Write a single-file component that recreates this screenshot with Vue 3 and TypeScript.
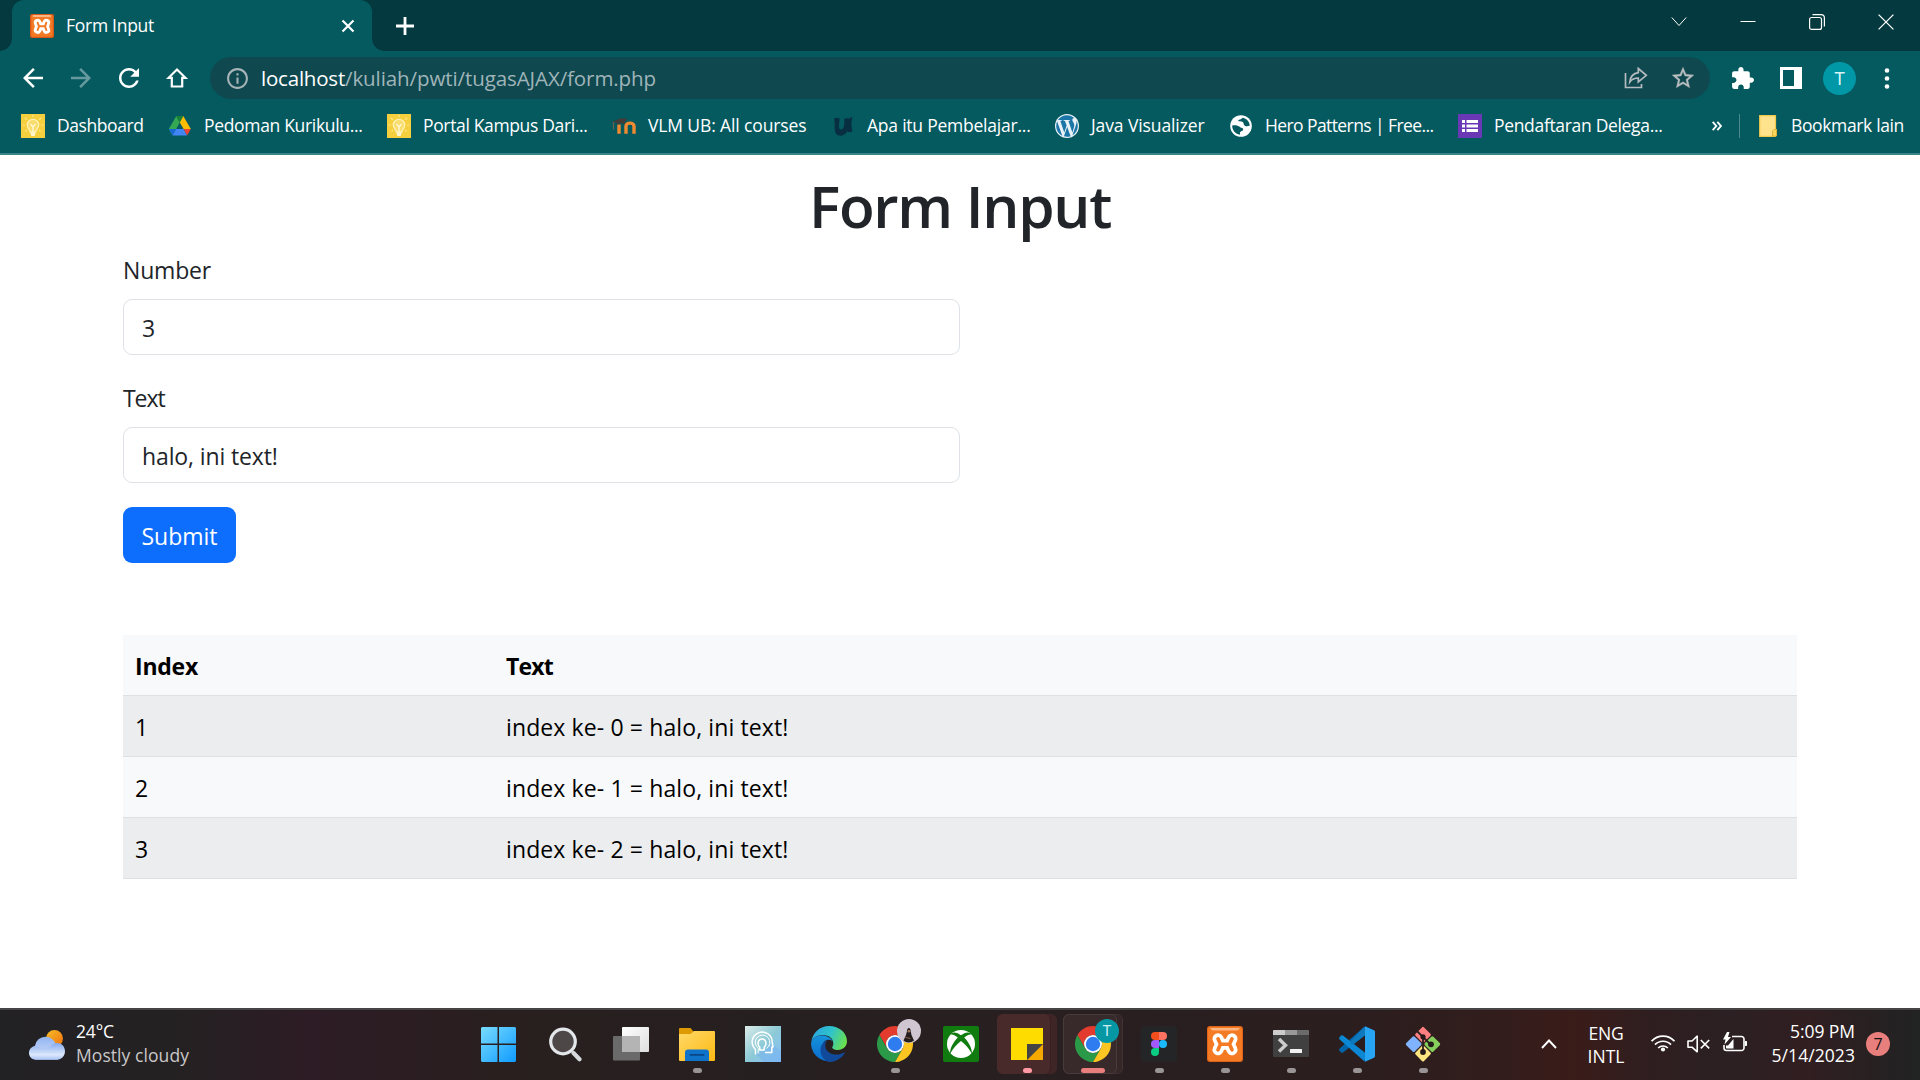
<script setup lang="ts">
import type { Directive } from 'vue'

interface Bookmark {
  icon: 'bulb' | 'drive' | 'moodle' | 'unesa' | 'wordpress' | 'globe' | 'forms'
  label: string
  width: number
}

const bookmarks: Bookmark[] = [
  { icon: 'bulb', label: 'Dashboard', width: 87 },
  { icon: 'drive', label: 'Pedoman Kurikulu...', width: 159 },
  { icon: 'bulb', label: 'Portal Kampus Dari...', width: 165 },
  { icon: 'moodle', label: 'VLM UB: All courses', width: 159 },
  { icon: 'unesa', label: 'Apa itu Pembelajar...', width: 164 },
  { icon: 'wordpress', label: 'Java Visualizer', width: 114 },
  { icon: 'globe', label: 'Hero Patterns | Free...', width: 169 },
  { icon: 'forms', label: 'Pendaftaran Delega...', width: 169 },
]

const rows = [0, 1, 2].map((i) => ({ index: i + 1, text: `index ke- ${i} = halo, ini text!` }))

// Spreads the letters of an element so that its text takes the given width.
const vFit: Directive<HTMLElement, number> = {
  mounted(el, { value }) {
    const range = document.createRange()
    range.selectNodeContents(el)
    const natural = range.getBoundingClientRect().width
    const count = (el.textContent ?? '').trim().length
    el.style.letterSpacing = `${(value - natural) / count}px`
  },
}
</script>

<template>
  <div class="screen">
    <header class="browser">
      <div class="tabstrip">
        <div class="tab">
          <svg class="favicon" viewBox="0 0 36 36">
            <rect width="36" height="36" rx="3" fill="#d95a18" />
            <rect x="2" y="2" width="32" height="32" rx="2" fill="#f37a25" />
            <rect x="4" y="1.5" width="28" height="3" rx="1.5" fill="#fbb684" />
            <g fill="none" stroke-linecap="round" stroke-linejoin="round">
              <path d="M11.5 13l2 5.500-2 5.500M13.500 18.500h9M24.500 13l-2 5.500 2 5.500" stroke="#fff" stroke-width="11.500" />
              <path d="M11.500 13l2 5.500-2 5.500M13.500 18.500h9M24.500 13l-2 5.500 2 5.500" stroke="#f37a25" stroke-width="3" />
            </g>
          </svg>
          <span v-fit="88" class="tab-title">Form Input</span>
          <svg class="tab-close" viewBox="0 0 14 14"><path d="M1.500 1.500l11 11M12.500 1.500l-11 11" stroke="#fff" stroke-width="2.200" /></svg>
        </div>
        <svg class="new-tab" viewBox="0 0 18 18"><path d="M9 0v18M0 9h18" stroke="#fff" stroke-width="2.800" /></svg>
        <div class="window-buttons">
          <svg viewBox="0 0 16 16"><path d="M.8 3.500L8 11.500l7.200-8" stroke-width="1" /></svg>
          <svg viewBox="0 0 16 16"><path d="M.5 7.500h15" stroke-width="1" /></svg>
          <svg viewBox="0 0 16 16"><rect x=".6" y="3.500" width="11.900" height="11.900" rx="2" /><path d="M3.500.600H12a3.400 3.400 0 0 1 3.400 3.400v8.500" /></svg>
          <svg viewBox="0 0 16 16"><path d="M.6.600l14.800 14.800M15.400.600L.6 15.400" stroke-width="1.300" /></svg>
        </div>
      </div>

      <div class="toolbar">
        <svg class="nav" viewBox="0 0 24 24"><path d="M20 11H7.830l5.590-5.590L12 4l-8 8 8 8 1.410-1.410L7.830 13H20v-2z" fill="#fff" /></svg>
        <svg class="nav" viewBox="0 0 24 24"><path d="M4 11h12.170l-5.590-5.590L12 4l8 8-8 8-1.410-1.410L16.170 13H4v-2z" fill="#679a9e" /></svg>
        <svg class="nav" viewBox="0 0 24 24"><path d="M17.650 6.350C16.200 4.900 14.210 4 12 4c-4.420 0-7.990 3.580-7.990 8s3.570 8 7.990 8c3.730 0 6.840-2.550 7.730-6h-2.080c-.82 2.330-3.040 4-5.650 4-3.310 0-6-2.690-6-6s2.690-6 6-6c1.660 0 3.140.690 4.220 1.780L13 11h7V4l-2.350 2.350z" fill="#fff" /></svg>
        <svg class="nav" viewBox="0 0 30 30"><path d="M15 6.500L6.600 14.800h3.200v8.700h10.400v-8.700h3.200z" fill="none" stroke="#fff" stroke-width="2.200" /></svg>
        <div class="omnibox">
          <svg class="info" viewBox="0 0 24 24"><path d="M11 7h2v2h-2zm0 4h2v6h-2zm1-9C6.480 2 2 6.480 2 12s4.480 10 10 10 10-4.480 10-10S17.520 2 12 2zm0 18c-4.410 0-8-3.590-8-8s3.590-8 8-8 8 3.590 8 8-3.590 8-8 8z" fill="#a6b4b8" /></svg>
          <span class="url"><b v-fit="84">localhost</b><span v-fit="311">/kuliah/pwti/tugasAJAX/form.php</span></span>
          <svg class="share" viewBox="0 0 24 24"><g fill="none" stroke="#b3bbbe" stroke-width="1.700"><path d="M1.500 7v14.500H17.500V18" /><path d="M14.300 2.500L22.300 9.300l-8 6.700v-4c-4 0-6.500 1.200-8.500 4 .5-5 3.500-8.700 8.500-9.400z" /></g></svg>
          <svg class="star" viewBox="0 0 24 24"><path d="M22 9.240l-7.190-.62L12 2 9.190 8.630 2 9.240l5.460 4.730L5.820 21 12 17.270 18.180 21l-1.630-7.030L22 9.240zM12 15.400l-3.760 2.270 1-4.280-3.320-2.880 4.380-.38L12 6.100l1.710 4.040 4.380.380-3.320 2.880 1 4.280L12 15.400z" fill="#b9bdbf" stroke="#b9bdbf" stroke-width=".3" /></svg>
        </div>
        <svg class="ext" viewBox="0 0 24 24"><path d="M20.500 11H19V7c0-1.100-.9-2-2-2h-4V3.500C13 2.120 11.880 1 10.500 1S8 2.120 8 3.500V5H4c-1.100 0-1.990.900-1.990 2v3.800H3.500c1.490 0 2.700 1.210 2.700 2.700s-1.210 2.700-2.700 2.700H2V20c0 1.100.900 2 2 2h3.800v-1.500c0-1.490 1.210-2.700 2.700-2.700 1.490 0 2.700 1.210 2.700 2.700V22H17c1.100 0 2-.9 2-2v-4h1.500c1.380 0 2.500-1.120 2.500-2.500S21.880 11 20.500 11z" fill="#fff" /></svg>
        <svg class="panel" viewBox="0 0 22 22"><path d="M0 0h22v22H0zM3 3v16h11V3z" fill="#fff" fill-rule="evenodd" /></svg>
        <span class="avatar">T</span>
        <svg class="kebab" viewBox="0 0 6 21"><circle cx="3" cy="2.500" r="2.300" fill="#fff" /><circle cx="3" cy="10.500" r="2.300" fill="#fff" /><circle cx="3" cy="18.500" r="2.300" fill="#fff" /></svg>
      </div>

      <div class="bookmarks">
        <div v-for="(b, i) in bookmarks" :key="i" class="bookmark">
          <svg viewBox="0 0 24 24">
            <g v-if="b.icon === 'bulb'">
              <rect width="24" height="24" fill="#f5cf3d" />
              <path d="M9.300 18c0-2.500-3-3.500-3-7a5.700 5.700 0 0 1 11.400 0c0 3.500-3 4.500-3 7z" fill="#f8dc6c" stroke="#fff2b8" stroke-width="1.300" />
              <path d="M9.500 10l2.500 3 2.500-3M12 13v5" fill="none" stroke="#fff8dc" stroke-width="1.300" />
              <path d="M9.300 18.500h5.400l-1 3.500h-3.400z" fill="#fff5cf" />
              <path d="M12 1v2M4 4l1.800 1.800M20 4l-1.800 1.800M1.500 11h2.200M20.300 11h2.200M4.500 17.500L6 16M19.500 17.500L18 16" stroke="#fbe78f" stroke-width="1.200" />
            </g>
            <g v-else-if="b.icon === 'drive'" transform="translate(.8 2)">
              <path d="M7.500 0L0 13l3.700 6.500L11 6.500z" fill="#34a853" />
              <path d="M7.500 0h7L11 6.500z" fill="#188038" />
              <path d="M14.500 0L22 13h-7.200L11 6.500z" fill="#fbbc04" />
              <path d="M3.700 19.500L7.300 13h7.500l3.600 6.500z" fill="#4285f4" />
              <path d="M0 13h7.300l-3.600 6.500z" fill="#1967d2" />
              <path d="M14.800 13H22l-3.600 6.500z" fill="#ea4335" />
            </g>
            <g v-else-if="b.icon === 'moodle'">
              <path d="M7 19.700V10.500M14 19.700V12c0-3.800 8-3.800 8 0v7.700" fill="none" stroke="#ef8a30" stroke-width="3.400" />
              <path d="M0 8L8.500 4.200l6.800.3-2.300 3.300v2.400c-2.500-1.300-5.500-.9-7.800.6L4.500 8.500z" fill="#433d3a" />
              <path d="M1.500 8v7.500" stroke="#6b6252" stroke-width="1.200" />
            </g>
            <path v-else-if="b.icon === 'unesa'" d="M3 4.500c2-1 4.200-.9 5.800.3-.6 4-1.400 8.400-.3 10 1 1.300 2.700 1 3.700-.6 1.100-2 1.300-5.700 1-9.200 1.500-.8 3.200-.9 4.500-.3l3.800-2-.8 3.200c-.4 3.500-.5 7.500.8 11-1.600 1.600-3.700 1.800-5.200.6-2.600 4.500-8.300 5.600-11.200 2.200C2.700 16.500 4.500 9.500 3 4.500z" fill="#082e42" />
            <g v-else-if="b.icon === 'wordpress'">
              <circle cx="12" cy="12" r="12" fill="#e8f1f5" />
              <path fill="#1b75a7" d="M21.469 6.825c.84 1.537 1.318 3.300 1.318 5.175 0 3.979-2.156 7.456-5.363 9.325l3.295-9.527c.615-1.540.820-2.771.820-3.864 0-.405-.026-.780-.070-1.110m-7.981.105c.647-.030 1.232-.105 1.232-.105.582-.075.514-.930-.067-.899 0 0-1.755.135-2.880.135-1.064 0-2.850-.150-2.850-.150-.585-.030-.661.855-.075.885 0 0 .540.061 1.125.090l1.680 4.605-2.370 7.080L5.354 6.900c.649-.030 1.234-.100 1.234-.100.585-.075.516-.930-.065-.896 0 0-1.746.138-2.874.138-.200 0-.438-.008-.690-.015C4.911 3.150 8.235 1.215 12 1.215c2.809 0 5.365 1.072 7.286 2.833-.046-.003-.091-.009-.141-.009-1.060 0-1.812.923-1.812 1.914 0 .890.513 1.643 1.060 2.531.411.720.890 1.643.890 2.977 0 .915-.354 1.994-.821 3.479l-1.075 3.585-3.900-11.610.001.014zM12 22.784c-1.059 0-2.081-.153-3.048-.437l3.237-9.406 3.315 9.087c.024.053.050.101.078.149-1.120.393-2.325.609-3.582.609M1.211 12c0-1.564.336-3.050.935-4.390L7.290 21.709C3.694 19.960 1.212 16.271 1.211 12" />
            </g>
            <g v-else-if="b.icon === 'globe'">
              <circle cx="12" cy="12" r="10.800" fill="#fff" />
              <path d="M13.500 3.800c3.800.6 6.800 3.600 7.300 7.600-1.500 1-4.300 1.200-5.500-.2-1-1.300-.3-2.700-2-3.400-1.500-.5-3.500.2-4-1-.3-1.300 3.500-1.200 4.200-3z" fill="#055a60" />
              <path d="M3.200 11.500c2.700-.6 5.800-.2 7.500 1.300 1.200 1.300 3.400.8 3.500 2.700 0 1.800-2.700 1.500-3.200 3-.2.700.2 1.400 0 2.200-4.500-.5-8-4.500-7.800-9.200z" fill="#055a60" />
            </g>
            <g v-else>
              <rect width="24" height="24" fill="#6a37b5" />
              <path d="M4 6h3v3H4zM8.500 6H20v3H8.500zM4 10.500h3v3H4zM8.500 10.500H20v3H8.500zM4 15h3v3H4zM8.500 15H20v3H8.500z" fill="#fff" />
            </g>
          </svg>
          <span v-fit="b.width - 0.5" class="bookmark-label" :style="{ width: b.width + 'px' }">{{ b.label }}</span>
        </div>
        <svg class="more" viewBox="0 0 10 10"><path d="M.7.800L4.300 5 .7 9.200M5.300.800L8.900 5 5.300 9.200" fill="none" stroke="#fff" stroke-width="1.900" /></svg>
        <span class="divider"></span>
        <svg class="folder" viewBox="0 0 18 22"><path d="M.7.700h15.800v13.800h.9v5.800l-1 1H.7z" fill="#ffe38c" stroke="#f2c94c" stroke-width="1.200" /><path d="M13.500 21v-5l1.500-1.500h2.500V20l-1 1.300z" fill="#fbd65c" stroke="#dba92d" stroke-width=".8" /></svg>
        <span v-fit="113" class="bookmark-label">Bookmark lain</span>
      </div>
    </header>

    <main class="page">
      <h1><span v-fit="302">Form Input</span></h1>
      <form class="form" @submit.prevent>
        <label for="number"><span v-fit="88">Number</span></label>
        <input id="number" type="text" value="3" />
        <label for="text"><span v-fit="41.5">Text</span></label>
        <input id="text" type="text" value="halo, ini text!" />
        <button type="submit"><span v-fit="76">Submit</span></button>
      </form>
      <table>
        <thead>
          <tr>
            <th class="index"><span v-fit="63">Index</span></th>
            <th><span v-fit="47">Text</span></th>
          </tr>
        </thead>
        <tbody>
          <tr v-for="row in rows" :key="row.index">
            <td>{{ row.index }}</td>
            <td><span v-fit="282.5">{{ row.text }}</span></td>
          </tr>
        </tbody>
      </table>
    </main>

    <footer class="taskbar">
      <div class="weather">
        <svg viewBox="0 0 36 30">
          <defs>
            <linearGradient id="sun" x1="0" y1="0" x2="1" y2="1"><stop offset="0" stop-color="#f6bd2a" /><stop offset="1" stop-color="#f0700c" /></linearGradient>
            <linearGradient id="cloudBack" x1="0" y1="0" x2="0" y2="1"><stop offset="0" stop-color="#92b4f2" /><stop offset="1" stop-color="#d3e1fa" /></linearGradient>
            <linearGradient id="cloudFront" x1="0" y1="0" x2="0" y2="1"><stop offset="0" stop-color="#84a9ee" /><stop offset=".7" stop-color="#dce8fb" /><stop offset="1" stop-color="#a8c4f6" /></linearGradient>
          </defs>
          <circle cx="25.500" cy="8.500" r="8.500" fill="url(#sun)" />
          <path d="M7 29.500a7 7 0 0 1-1-13.800A10.700 10.700 0 0 1 27 15l2 14.500z" fill="url(#cloudBack)" />
          <path d="M7 29.700c-3.500 0-7-2.500-7-6.700s3-6.500 6.500-6.500c3 0 5 1 6.500 2.500L21 17c1.500-2.500 4-4 7-4 4.500 0 8 3.500 8 8.200s-3.500 8.500-8 8.500z" fill="url(#cloudFront)" />
        </svg>
        <div class="weather-text">
          <span v-fit="38">24°C</span>
          <span v-fit="113" class="muted">Mostly cloudy</span>
        </div>
      </div>

      <nav class="apps">
        <div class="app">
          <svg viewBox="0 0 36 36">
            <defs><linearGradient id="win" x1="0" y1="0" x2="1" y2="1"><stop offset="0" stop-color="#79dcff" /><stop offset="1" stop-color="#0f9bff" /></linearGradient></defs>
            <path d="M1 1h15.500v16.500H0V2zM18 1h16l1 1v15.500H18zM0 19h16.500v17H1l-1-1zM18 19h17v16l-1 1H18z" fill="url(#win)" />
          </svg>
        </div>
        <div class="app">
          <svg viewBox="0 0 36 36"><path d="M26.500 27l6 6.300" stroke="#d7dadd" stroke-width="4.200" stroke-linecap="round" /><circle cx="16" cy="15.500" r="12.300" fill="#4d4748" stroke="#e4e7ea" stroke-width="3.200" /></svg>
        </div>
        <div class="app">
          <svg viewBox="0 0 36 36">
            <defs><linearGradient id="view" x1="0" y1="0" x2="1" y2="1"><stop offset="0" stop-color="#fff" /><stop offset="1" stop-color="#dedede" /></linearGradient></defs>
            <rect x="9" y="1" width="27" height="25" rx="1" fill="url(#view)" /><rect y="10" width="27" height="24.500" rx="1" fill="#6a6a6a" /><path d="M9 10h18v16H9z" fill="#b4b4b4" />
          </svg>
        </div>
        <div class="app">
          <svg viewBox="0 0 36 36">
            <defs><linearGradient id="dir" x1="0" y1="0" x2="1" y2="1"><stop offset="0" stop-color="#ffd968" /><stop offset="1" stop-color="#fdb913" /></linearGradient></defs>
            <path d="M0 3a1 1 0 0 1 1-1h10.500l3 3.500V9H0z" fill="#dd9a05" /><path d="M0 8h11.500L15 5h20a1 1 0 0 1 1 1v28a1 1 0 0 1-1 1H1a1 1 0 0 1-1-1z" fill="url(#dir)" /><path d="M6 35v-8.500a3 3 0 0 1 3-3h18a3 3 0 0 1 3 3V35z" fill="#0f74c9" /><rect x="10.500" y="28" width="15" height="1.800" rx=".8" fill="#0a4688" />
          </svg>
          <i class="dot"></i>
        </div>
        <div class="app">
          <svg viewBox="0 0 36 36">
            <defs><linearGradient id="tips" x1="0" y1="0" x2="1" y2="1"><stop offset="0" stop-color="#dcece8" /><stop offset=".5" stop-color="#8dcad6" /><stop offset="1" stop-color="#84bdfb" /></linearGradient></defs>
            <rect width="36" height="36" fill="url(#tips)" /><path d="M11 28l8 8h17V25l-8-6z" fill="#76b1ee" opacity=".5" />
            <g fill="none" stroke="#fff" stroke-width="1.500" stroke-linejoin="round"><path d="M10.500 28.500v-5a10 10 0 1 1 16.700-7.500l.8 5h-1.200v5.500H20" /><path d="M14.800 24v-2.800c-3.200-3.200-1.600-8.200 2.200-8.200s5.400 5 2.200 8.200V24z" /></g>
            <path d="M13.200 27.500v-5.300a7.300 7.300 0 1 1 8.300.3" fill="none" stroke="#fff" stroke-width="1" />
          </svg>
        </div>
        <div class="app">
          <svg viewBox="0 0 36 36">
            <defs>
              <linearGradient id="edgeTop" x1="0" y1=".3" x2="1" y2=".6"><stop offset="0" stop-color="#2aa4de" /><stop offset=".5" stop-color="#2fc3cc" /><stop offset="1" stop-color="#6be04b" /></linearGradient>
              <linearGradient id="edgeLow" x1="0" y1="0" x2="0" y2="1"><stop offset="0" stop-color="#1692dc" /><stop offset="1" stop-color="#0a6ccc" /></linearGradient>
            </defs>
            <path d="M.3 16C1.500 6.500 9 0 18 0c10.500 0 18 7 18 15.300 0 5-4 8.700-9 8.700-4 0-6.200-1.500-5.700-3 .8-1.300 1-2.200 1-3.500 0-5-4.500-8.500-10-8.500C6 9 1.500 12 .3 16z" fill="url(#edgeTop)" />
            <path d="M.3 16C1.500 12 6 9.500 11 9.500c5.500 0 9 2.500 10.500 5.500-4-3-10-1-10 5.500 0 7.500 7.500 14 14.500 13A18 18 0 0 1 0 18z" fill="url(#edgeLow)" />
            <path d="M16.500 14.500c-2.500 2-3 5.500-1.500 8.500 2 4 7 6 12 5.500 2.500-.3 4.500-1.200 6-2 .8-.3 1 .3.500 1-3.500 5.500-9.500 8.500-15.500 8.500-5.500-2-8.500-7-8.500-12 0-5 3-8.500 7-9.500z" fill="#114a9a" />
          </svg>
        </div>
        <div class="app">
          <svg viewBox="0 0 48 48"><path d="M24 12h20.780A24 24 0 0 0 3.220 12l10.390 18A12 12 0 0 1 24 12z" fill="#e33b2e" /><path d="M13.610 30L3.220 12A24 24 0 0 0 24 48l10.390-18a12 12 0 0 1-20.780 0z" fill="#2a9a48" /><path d="M24 12h20.780A24 24 0 0 1 24 48l10.390-18A12 12 0 0 0 24 12z" fill="#fcc521" /><circle cx="24" cy="24" r="12" fill="#fff" /><circle cx="24" cy="24" r="9.600" fill="#2f7cf0" /></svg>
          <svg class="profile" viewBox="0 0 24 24"><circle cx="12" cy="12" r="12" fill="#cfc6d1" /><path d="M10 12c0-4 3.700-4 3.700 0l.8 4 2.500 5.500c-3 2.500-8 2.500-10.500 0L9 16z" fill="#241e1e" /><circle cx="11.900" cy="12.300" r="1.300" fill="#a37a5c" /><path d="M8.500 18.500l5 1" stroke="#8d6a45" stroke-width="1" /></svg>
          <i class="dot"></i>
        </div>
        <div class="app">
          <svg viewBox="0 0 36 36"><rect width="36" height="36" rx="2" fill="#107c10" /><circle cx="18" cy="18" r="14" fill="#fff" /><path d="M9 7c3-1.500 6 .3 9 2.300C21 7.300 24 5.500 27 7l1.500 1.500c-2.500-.5-5.200 1-7.300 3C25 15.500 29 21 29 28c-3-5.500-7-10-11-13-4 3-8 7.500-11 13 0-7 4-12.500 7.800-16.500-2.100-2-4.800-3.500-7.300-3z" fill="#107c10" /></svg>
        </div>
        <div class="app stacked notes">
          <svg viewBox="0 0 36 36"><path d="M2 2h32v16L18 34H2z" fill="#fedc00" /><path d="M34 18v16H18z" fill="#f5a800" /><path d="M18 18h16L18 34z" fill="#454344" /></svg>
          <i class="dot pink"></i>
        </div>
        <div class="app stacked current">
          <svg viewBox="0 0 48 48"><path d="M24 12h20.780A24 24 0 0 0 3.220 12l10.390 18A12 12 0 0 1 24 12z" fill="#e33b2e" /><path d="M13.610 30L3.220 12A24 24 0 0 0 24 48l10.390-18a12 12 0 0 1-20.780 0z" fill="#2a9a48" /><path d="M24 12h20.780A24 24 0 0 1 24 48l10.390-18A12 12 0 0 0 24 12z" fill="#fcc521" /><circle cx="24" cy="24" r="12" fill="#fff" /><circle cx="24" cy="24" r="9.600" fill="#2f7cf0" /></svg>
          <span class="profile letter">T</span>
          <i class="dot wide"></i>
        </div>
        <div class="app">
          <svg viewBox="0 0 36 36"><rect width="36" height="36" rx="3" fill="#242526" /><path d="M18 6h-4a4 4 0 0 0 0 8h4z" fill="#f24e1e" /><path d="M18 6h4a4 4 0 0 1 0 8h-4z" fill="#ff7262" /><path d="M18 14h-4a4 4 0 0 0 0 8h4z" fill="#a259ff" /><circle cx="22" cy="18" r="4" fill="#1abcfe" /><path d="M18 22h-4a4 4 0 1 0 4 4z" fill="#0acf83" /></svg>
          <i class="dot"></i>
        </div>
        <div class="app">
          <svg viewBox="0 0 36 36">
            <rect width="36" height="36" rx="3" fill="#df641a" />
            <rect x="1" y="1" width="34" height="34" rx="2.500" fill="#f47b24" />
            <path d="M3.500 2h29c-.3 1.500-1 2.500-3 2.500h-23c-2 0-2.700-1-3-2.500z" fill="#fbb684" />
            <g fill="none" stroke-linecap="round" stroke-linejoin="round">
              <path d="M11 12.800l2.500 5.500-2.500 5.500M13.500 18.300h9M25 12.800l-2.500 5.500 2.500 5.500" stroke="#fff" stroke-width="11" />
              <path d="M11 12.800l2.500 5.500-2.500 5.500M13.500 18.300h9M25 12.800l-2.500 5.500 2.500 5.500" stroke="#f47b24" stroke-width="3.600" />
            </g>
          </svg>
          <i class="dot"></i>
        </div>
        <div class="app">
          <svg viewBox="0 0 36 36"><rect y="4" width="36" height="27" rx="1" fill="#404040" /><path d="M0 9V5a1 1 0 0 1 1-1h11v5z" fill="#ccc" /><path d="M12 4h12v5H12z" fill="#999" /><path d="M24 4h11a1 1 0 0 1 1 1v4H24z" fill="#6b6b6b" /><path d="M6 13l6.500 6.300L6 25.500" fill="none" stroke="#ccc" stroke-width="3.400" /><rect x="17" y="23" width="12" height="4" rx=".5" fill="#f2f2f2" /></svg>
          <i class="dot"></i>
        </div>
        <div class="app">
          <svg viewBox="0 0 36 36"><path d="M27 8.500L4 26.500a2.200 2.200 0 0 1-2 0L.5 24.800c-.6-.7-.5-1.500.2-2.200L25.500.5z" fill="#0065a9" /><path d="M27 27.500L4 9.500a2.200 2.200 0 0 0-2 0L.5 11.200c-.6.700-.5 1.500.2 2.200L25.500 35.500z" fill="#0b87d3" /><path d="M27 8.500L13.500 19 11 16.300 25.500.5z" fill="#0f79bd" /><path d="M26 35.800V.2L35 4.200a1.800 1.800 0 0 1 1 1.700v24.200a1.800 1.800 0 0 1-1 1.700z" fill="#27a5f3" /></svg>
          <i class="dot"></i>
        </div>
        <div class="app">
          <svg viewBox="0 0 36 36">
            <g transform="rotate(45 18 18)"><rect x="5.500" y="5.500" width="12" height="12" rx="1.500" fill="#ff8080" /><rect x="18.700" y="5.500" width="12" height="12" rx="1.500" fill="#86cf5c" /><rect x="5.500" y="18.700" width="12" height="12" rx="1.500" fill="#80b3ff" /><rect x="18.700" y="18.700" width="12" height="12" rx="1.500" fill="#ffe680" /></g>
            <path d="M11 4l7 7v15M18 11l7.500 7.500" fill="none" stroke="#2c1f20" stroke-width="1.800" /><circle cx="18" cy="10.800" r="2.600" fill="#241a1b" /><circle cx="26" cy="18.300" r="2.900" fill="#241a1b" /><circle cx="18" cy="26" r="2.900" fill="#241a1b" />
          </svg>
          <i class="dot"></i>
        </div>
      </nav>

      <div class="tray">
        <svg class="up" viewBox="0 0 16 10"><path d="M1 9l7-7.500L15 9" fill="none" stroke="#fff" stroke-width="1.900" /></svg>
        <div class="lang"><span v-fit="35">ENG</span><span v-fit="37">INTL</span></div>
        <svg class="wifi" viewBox="0 0 24 18"><g fill="none" stroke="#fff" stroke-width="1.700"><path d="M.6 7.200a15.500 15.500 0 0 1 22.800 0M4 10.700a11 11 0 0 1 16 0M7.200 14a6.800 6.800 0 0 1 9.600 0" /></g><circle cx="12" cy="15.500" r="2.100" fill="#fff" /></svg>
        <svg class="sound" viewBox="0 0 24 18"><g fill="none" stroke="#fff" stroke-width="1.600"><path d="M1 6h4l5.200-4.800v15.600L5 12.200H1z" stroke-linejoin="round" /><path d="M13.800 5l8.400 8.400M22.200 5l-8.400 8.400" /></g></svg>
        <svg class="battery" viewBox="0 0 24 20"><path d="M9 4.500h9.500a2.500 2.500 0 0 1 2.500 2.500v9a2.500 2.500 0 0 1-2.500 2.500h-15A2.500 2.500 0 0 1 1 16v-3" fill="none" stroke="#fff" stroke-width="1.600" /><path d="M22 9h1.200a.8.800 0 0 1 .8.800v3.400a.8.800 0 0 1-.8.800H22zM3 16V13.500h2L10.500 7v9.500H3.500zM4 0L0 7.500h2.500L1.500 12.500 8 5H5l1.500-5z" fill="#fff" /></svg>
        <div class="clock"><span v-fit="65">5:09 PM</span><span v-fit="83.5">5/14/2023</span></div>
        <span class="count">7</span>
      </div>
    </footer>
  </div>
</template>

<style>
body {
  margin: 0;
  background: #fff;
}
</style>

<style scoped>
.screen {
  width: 1920px;
  height: 1080px;
  display: flex;
  flex-direction: column;
  overflow: hidden;
  background: #fff;
  font-family: "Open Sans", "Noto Sans", sans-serif;
  color: #212529;
}
svg {
  display: block;
  flex: none;
}
span {
  white-space: nowrap;
}

/* browser chrome */
.browser {
  height: 153px;
  flex: none;
  background: #055a60;
  border-bottom: 2px solid #37848a;
  color: #fff;
}
.tabstrip {
  height: 51px;
  display: flex;
  background: #03393f;
}
.tab {
  position: relative;
  box-sizing: border-box;
  width: 360px;
  height: 51px;
  margin-left: 12px;
  padding: 0 17px 0 18px;
  display: flex;
  align-items: center;
  background: #055a60;
  border-radius: 12px 12px 0 0;
}
.tab::before,
.tab::after {
  content: "";
  position: absolute;
  bottom: 0;
  width: 12px;
  height: 12px;
}
.tab::before {
  right: 100%;
  background: radial-gradient(circle at 0 0, #03393f 11.500px, #055a60 12px);
}
.tab::after {
  left: 100%;
  background: radial-gradient(circle at 100% 0, #03393f 11.500px, #055a60 12px);
}
.favicon {
  width: 24px;
  height: 24px;
  margin-right: 12px;
}
.tab-title {
  flex: 1;
  font-size: 17.500px;
  line-height: 24px;
  padding-bottom: 2px;
}
.tab-close {
  width: 14px;
  height: 14px;
}
.new-tab {
  width: 18px;
  height: 18px;
  margin: 17px 0 0 24px;
}
.window-buttons {
  margin: 14px 26px 0 auto;
  display: flex;
  gap: 53px;
}
.window-buttons svg {
  width: 16px;
  height: 16px;
  fill: none;
  stroke: #fff;
  stroke-width: 1.200;
}
.toolbar {
  height: 54px;
  display: flex;
  align-items: center;
  padding-left: 18px;
}
.nav {
  width: 30px;
  height: 30px;
  margin-right: 18px;
}
.omnibox {
  box-sizing: border-box;
  width: 1500px;
  height: 42px;
  border-radius: 21px;
  padding: 0 16px 0 15px;
  display: flex;
  align-items: center;
  background: #0f484f;
}
.info {
  width: 25px;
  height: 25px;
  margin-right: 11px;
}
.url {
  flex: 1;
  font-size: 20.500px;
  line-height: 42px;
  color: #a0b5b9;
}
.url b {
  font-weight: 400;
  color: #fff;
}
.share {
  width: 24px;
  height: 24px;
  margin-right: 22px;
}
.star {
  width: 26px;
  height: 26px;
  margin-right: -2px;
}
.ext {
  width: 25px;
  height: 25px;
  margin-left: 20px;
}
.panel {
  width: 22px;
  height: 22px;
  margin-left: 25px;
}
.avatar {
  width: 33px;
  height: 33px;
  margin-left: 21px;
  border-radius: 50%;
  background: #0097a7;
  color: #d9f4f6;
  font: 18px/33px Roboto, sans-serif;
  text-align: center;
}
.kebab {
  width: 6px;
  height: 21px;
  margin-left: 28px;
}
.bookmarks {
  height: 42px;
  display: flex;
  align-items: center;
  padding-left: 21px;
}
.bookmark {
  display: flex;
  align-items: center;
  gap: 12px;
  margin-right: 24px;
}
.bookmark svg {
  width: 24px;
  height: 24px;
}
.bookmark-label {
  font-size: 17.500px;
  line-height: 24px;
  padding-bottom: 2px;
}
.more {
  width: 10px;
  height: 10px;
  margin-left: 25px;
}
.divider {
  width: 1px;
  height: 24px;
  margin: 0 19px 0 17px;
  background: #4c8a8f;
}
.folder {
  width: 18px;
  height: 22px;
  margin-right: 14px;
}

/* page */
.page {
  flex: 1;
  padding: 14px 123px 0;
  font-size: 23px;
}
h1 {
  margin: 0 0 11px;
  font-size: 58.500px;
  font-weight: 600;
  line-height: 72px;
  text-align: center;
}
.form {
  width: 837px;
  display: flex;
  flex-direction: column;
  align-items: flex-start;
}
label {
  line-height: 36px;
  padding-bottom: 11px;
}
input {
  box-sizing: border-box;
  width: 100%;
  height: 56px;
  margin: 0 0 24px;
  padding: 1px 18px 0;
  border: 1px solid #dee2e6;
  border-radius: 9px;
  background: #fff;
  color: #212529;
  font: inherit;
  letter-spacing: -.12px;
  outline: none;
}
#number {
  margin-bottom: 25px;
}
button {
  width: 113px;
  height: 56px;
  padding: 1px 0 0;
  border: 0;
  border-radius: 9px;
  background: #0d6efd;
  color: #fff;
  font: inherit;
  text-align: center;
}
table {
  width: 1674px;
  margin-top: 72px;
  border-collapse: separate;
  border-spacing: 0;
  table-layout: fixed;
  color: #000;
}
th,
td {
  box-sizing: border-box;
  height: 61px;
  padding: 1px 12px 0;
  border-bottom: 1px solid #dfe0e1;
  background: #f8f9fa;
  text-align: left;
  line-height: 36px;
}
th {
  font-weight: 700;
}
.index {
  width: 371px;
}
tbody tr:nth-child(odd) td {
  background: #ecedee;
}

/* taskbar */
.taskbar {
  box-sizing: border-box;
  height: 72px;
  flex: none;
  display: flex;
  border-top: 2px solid #474445;
  background: linear-gradient(90deg, #222124 0, #242122 9%, #2d1c25 16%, #2c1d23 20%, #291f1f 26%, #261f20 40%, #291f20 58%, #2b1e1f 70%, #321d1c 78%, #3a1c19 82%, #2f1e20 86%, #2b2023 90%, #311e21 94%, #262122 98%, #222323 100%);
  color: #fff;
  font-size: 17.500px;
}
.weather {
  width: 436px;
  padding: 0 0 0 29px;
  display: flex;
}
.weather svg {
  width: 36px;
  height: 30px;
  margin: 20px 11px 0 0;
}
.weather-text,
.clock {
  display: flex;
  flex-direction: column;
  padding-top: 9px;
  line-height: 24px;
}
.muted {
  color: #c9c7c8;
}
.apps {
  display: flex;
}
.app {
  position: relative;
  width: 66px;
  height: 70px;
}
.app > svg:first-child {
  position: relative;
  width: 36px;
  height: 36px;
  margin: 16px 15px 0;
}
.app > .profile {
  position: absolute;
  left: 35px;
  top: 9px;
  width: 24px;
  height: 24px;
}
.letter {
  border-radius: 50%;
  background: #0697a5;
  color: #c9edf0;
  font: 15px/24px Roboto, sans-serif;
  text-align: center;
}
.dot {
  position: absolute;
  left: 29px;
  top: 58px;
  width: 9px;
  height: 5px;
  border-radius: 2.500px;
  background: #999495;
}
.pink {
  background: #ff9aa5;
}
.wide {
  left: 21px;
  width: 24px;
  background: #e97f7c;
}
.stacked::before,
.stacked::after {
  content: "";
  position: absolute;
  box-sizing: border-box;
  top: 4px;
  height: 60px;
  border-radius: 6px;
}
.stacked::before {
  left: 3px;
  width: 60px;
  background: #3f2526;
}
.stacked::after {
  left: 3px;
  width: 54px;
  background: #482a2b;
  border-right: 1px solid #372021;
}
.current::before {
  background: #352628;
  border: 1px solid #403334;
}
.current::after {
  background: #382a2b;
  border: 1px solid #483b3c;
}
.app > * {
  z-index: 1;
}
.apps {
  padding-left: 1px;
}
.tray {
  flex: 1;
  display: flex;
  padding-left: 85px;
}
.up {
  width: 16px;
  height: 10px;
  margin-top: 29px;
}
.lang {
  width: 38px;
  margin-left: 30px;
  padding-top: 12px;
  display: flex;
  flex-direction: column;
  align-items: center;
  line-height: 23px;
}
.wifi {
  width: 24px;
  height: 18px;
  margin: 24px 0 0 26px;
}
.sound {
  width: 24px;
  height: 18px;
  margin: 25px 0 0 12px;
}
.battery {
  width: 24px;
  height: 20px;
  margin: 22px 0 0 12px;
}
.clock {
  width: 108px;
  align-items: flex-end;
}
.count {
  width: 24px;
  height: 24px;
  margin: 22px 0 0 11px;
  border-radius: 50%;
  background: #e97f7c;
  color: #111;
  font-size: 16px;
  line-height: 24px;
  text-align: center;
}
</style>
